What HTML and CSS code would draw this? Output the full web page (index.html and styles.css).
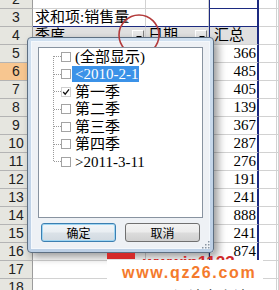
FILE: index.html
```html
<!DOCTYPE html>
<html lang="zh-CN">
<head>
    <meta charset="UTF-8">
    <title>数据透视表 筛选</title>
    <link rel="stylesheet" href="styles.css">
</head>
<body>

<div class="sheet">
    <div class="row">
        <div class="hdr">2</div><div></div><div></div><div class="c cap"></div><div></div><div></div>
    </div>
    <div class="row title">
        <div class="hdr">3</div><div class="a">求和项:销售量</div><div class="b"></div><div class="c"></div><div></div><div></div>
    </div>
    <div class="row fields">
        <div class="hdr">4</div>
        <div class="a fld"><span>季度</span><span class="drop"></span></div>
        <div class="b fld"><span>日期</span><span class="drop"></span></div>
        <div class="c fld">汇总</div>
        <div></div><div></div>
    </div>
    <div class="row"><div class="hdr">5</div><div></div><div></div><div class="c num">366</div><div></div><div></div></div>
    <div class="row"><div class="hdr sel">6</div><div></div><div></div><div class="c num">485</div><div></div><div></div></div>
    <div class="row"><div class="hdr">7</div><div></div><div></div><div class="c num">405</div><div></div><div></div></div>
    <div class="row"><div class="hdr">8</div><div></div><div></div><div class="c num">139</div><div></div><div></div></div>
    <div class="row"><div class="hdr">9</div><div></div><div></div><div class="c num">367</div><div></div><div></div></div>
    <div class="row"><div class="hdr">10</div><div></div><div></div><div class="c num">287</div><div></div><div></div></div>
    <div class="row"><div class="hdr">11</div><div></div><div></div><div class="c num">276</div><div></div><div></div></div>
    <div class="row"><div class="hdr">12</div><div></div><div></div><div class="c num">191</div><div></div><div></div></div>
    <div class="row"><div class="hdr">13</div><div></div><div></div><div class="c num">241</div><div></div><div></div></div>
    <div class="row"><div class="hdr">14</div><div></div><div></div><div class="c num">888</div><div></div><div></div></div>
    <div class="row"><div class="hdr">15</div><div></div><div></div><div class="c num">241</div><div></div><div></div></div>
    <div class="row"><div class="hdr">16</div><div></div><div></div><div class="c num">874</div><div></div><div></div></div>
    <div class="row"><div class="hdr">17</div><div></div><div></div><div class="c"></div><div></div><div></div></div>
    <div class="row"><div class="hdr">18</div><div></div><div></div><div class="c"></div><div></div><div></div></div>
</div>

<!-- filter popup opened from the 季度 field button -->
<div class="popup">
    <svg class="mark" width="44" height="44" viewBox="0 0 44 44">
        <circle cx="22" cy="22" r="20" fill="none" stroke="#b33a3a" stroke-width="1.6"/>
    </svg>
    <div class="panel">
        <ul class="tree">
            <li><span class="box"></span><span class="lbl">(全部显示)</span></li>
            <li><span class="box"></span><span class="lbl hi">&lt;2010-2-1</span></li>
            <li><span class="box on"><svg width="10" height="10" viewBox="0 0 10 10"><path d="M1.5 5 L4 7.8 L8.8 1.8" fill="none" stroke="#111" stroke-width="1.6"/></svg></span><span class="lbl">第一季</span></li>
            <li><span class="box"></span><span class="lbl">第二季</span></li>
            <li><span class="box"></span><span class="lbl">第三季</span></li>
            <li><span class="box"></span><span class="lbl">第四季</span></li>
            <li><span class="box"></span><span class="lbl">&gt;2011-3-11</span></li>
        </ul>
        <div class="btns">
            <button class="btn default">确定</button>
            <button class="btn">取消</button>
        </div>
    </div>
    <svg class="grip" width="8" height="8" viewBox="0 0 8 8">
        <rect x="6" y="0" width="1.5" height="1.5" fill="#8a96a2"/>
        <rect x="3" y="3" width="1.5" height="1.5" fill="#8a96a2"/>
        <rect x="6" y="3" width="1.5" height="1.5" fill="#8a96a2"/>
        <rect x="0" y="6" width="1.5" height="1.5" fill="#8a96a2"/>
        <rect x="3" y="6" width="1.5" height="1.5" fill="#8a96a2"/>
        <rect x="6" y="6" width="1.5" height="1.5" fill="#8a96a2"/>
    </svg>
</div>

<div class="wm">
    <div class="wm-red"><span class="bar"></span><span class="red-text">wwwip1123</span></div>
    <div class="wm-box">
        <div class="site">www.qz26.com</div>
        <div class="under">从而设计出小计</div>
    </div>
</div>

</body>
</html>
```

FILE: styles.css
```css
body {
    margin: 0;
    width: 279px;
    height: 290px;
    overflow: hidden;
    position: relative;
    background: #fff;
    font-family: "Liberation Serif", "Noto Sans CJK SC", serif;
}
.sheet {
    margin-top: -9px;
    height: 299px;
    overflow: hidden;
}
.row {
    display: grid;
    grid-template-columns: 33px 113px 63px 50px 18px 1fr;
    height: 18px;
}
.row > div {
    box-sizing: border-box;
    height: 18px;
    border-right: 1px solid #d2d2d2;
    border-bottom: 1px solid #d2d2d2;
    font-size: 15px;
    line-height: 17px;
    white-space: nowrap;
    color: #000;
}
.row .hdr {
    background: #e6e6e0;
    border-right-color: #9c9c9c;
    border-bottom-color: #b4b4b4;
    text-align: center;
    font: 14px/17px "Liberation Sans", sans-serif;
    color: #222;
}
.row .hdr.sel {
    background: #f7c690;
}
.row .c {
    border-left: 1px solid #1c2a80;
    border-right: 2px solid #1c2a80;
}
.row .cap {
    border-bottom-color: #1c2a80;
}
.title .a, .title .b, .title .c {
    border-bottom-color: #1c2a80;
}
.title .a {
    padding-left: 2px;
}
.row .fld {
    background: #e0e0e0;
    display: flex;
    align-items: flex-start;
    padding: 0 1px 0 2px;
}
.row .c.fld {
    padding-left: 4px;
}
.drop {
    margin-left: auto;
    margin-top: 3px;
    width: 12px;
    height: 13px;
    box-sizing: border-box;
    border: 1px solid;
    border-color: #fff #808080 #808080 #fff;
    background: #e8e8e8;
    position: relative;
}
.drop::after {
    content: "";
    position: absolute;
    left: 3px;
    top: 5px;
    border-left: 3px solid transparent;
    border-right: 3px solid transparent;
    border-top: 3px solid #000;
}
.row .num {
    text-align: right;
    padding-right: 1px;
}

/* popup */
.popup {
    position: absolute;
    left: 27px;
    top: 37px;
    width: 187px;
    height: 216px;
    box-sizing: border-box;
    border: 1px solid #5d6f82;
    border-radius: 4px;
    padding: 3px;
    background: linear-gradient(#cfdfef, #bccfe5);
    box-shadow: 4px 4px 8px rgba(0, 0, 0, 0.4);
    z-index: 5;
}
.mark {
    position: absolute;
    left: 89px;
    top: -25px;
    z-index: 1;
}
.panel {
    height: 100%;
    box-sizing: border-box;
    border: 1px solid #f4f8fc;
    background: #eef1f5;
    padding: 5px 6px 6px;
}
.tree {
    position: relative;
    z-index: 2;
    list-style: none;
    margin: 0;
    padding: 0;
    height: 171px;
    box-sizing: border-box;
    border: 1px solid #8893a0;
    background: #fff;
}
.tree::before {
    content: "";
    position: absolute;
    left: 14px;
    top: 8px;
    height: 105px;
    border-left: 1px dotted #9a9a9a;
}
.tree li {
    position: relative;
    height: 17.5px;
    display: flex;
    align-items: center;
    padding-left: 22px;
    font-size: 15px;
    line-height: 16px;
}
.tree li::before {
    content: "";
    position: absolute;
    left: 15px;
    top: 8px;
    width: 7px;
    border-top: 1px dotted #9a9a9a;
}
.box {
    width: 10px;
    height: 10px;
    box-sizing: border-box;
    border: 1px solid #a3a3a3;
    background: #fff;
    display: flex;
    align-items: center;
    justify-content: center;
}
.box.on {
    border-color: #d0d0d0;
}
.lbl {
    margin-left: 1px;
    padding: 0 1px 0 3px;
    white-space: nowrap;
}
.lbl.hi {
    background: #3b92e8;
    color: #fff;
}
.btns {
    display: grid;
    grid-template-columns: 1fr 1fr;
    gap: 9px;
    padding: 0 3px;
    margin-top: 5px;
}
.btn {
    height: 19px;
    padding: 0;
    border: 1px solid #707070;
    border-radius: 3px;
    background: linear-gradient(#f3f3f3 0, #ebebeb 48%, #dcdcdc 52%, #d0d0d0 100%);
    font: 12px/17px "Noto Sans CJK SC", sans-serif;
    color: #000;
}
.btn.default {
    border-color: #3c7fb1;
    box-shadow: inset 0 0 0 1px #9fd5f2;
    background: linear-gradient(#f2f5f8 0, #e9eef2 48%, #dbe2e8 52%, #d2dae1 100%);
}
.grip {
    position: absolute;
    right: 3px;
    bottom: 3px;
}

/* watermark */
.wm {
    position: absolute;
    left: 107px;
    top: 252px;
    width: 156px;
    z-index: 6;
}
.wm-red {
    height: 8px;
    overflow: hidden;
    display: flex;
    align-items: flex-start;
}
.bar {
    width: 28px;
    height: 6px;
    margin-top: 1px;
    background: #d42a2a;
}
.red-text {
    margin-left: 8px;
    font: bold 17px/19px "Liberation Sans", sans-serif;
    color: #cf2a2a;
    margin-top: 1px;
}
.wm-box {
    background: #fff;
    height: 38px;
    padding-left: 15px;
    overflow: hidden;
}
.site {
    font: bold 16px/22px "Liberation Sans", sans-serif;
    letter-spacing: 1.7px;
    color: #f47a2c;
    padding-top: 2px;
}
.under {
    margin-left: 21px;
    font: 15px/18px "Noto Sans CJK SC", sans-serif;
    color: #111;
    margin-top: 3px;
}
```
